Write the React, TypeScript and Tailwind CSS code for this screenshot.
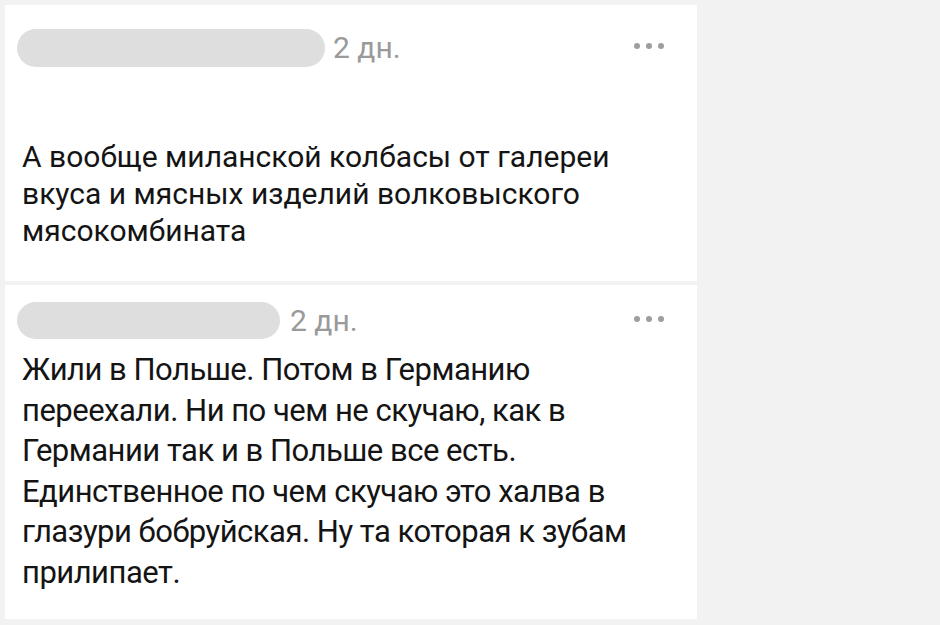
import React from "react";

function Dots() {
  return (
    <div className="flex gap-[6px] items-center">
      <span className="w-[6px] h-[6px] rounded-full bg-[#9e9e9e]" />
      <span className="w-[6px] h-[6px] rounded-full bg-[#9e9e9e]" />
      <span className="w-[6px] h-[6px] rounded-full bg-[#9e9e9e]" />
    </div>
  );
}

export default function App() {
  return (
    <div className="w-[940px] h-[625px] bg-[#f2f2f2] pt-[5px] pl-[5px] overflow-hidden" style={{ fontFamily: "Roboto, 'Noto Sans', sans-serif" }}>
      <div className="w-[692px] flex flex-col gap-[4px]">
        <div className="bg-white h-[276px] pl-[12px] pr-[33px] pt-[24px]">
          <div className="flex items-center">
            <div className="w-[308px] h-[38px] rounded-full bg-[#dedede]" />
            <span className="ml-[8px] text-[30px] leading-[38px] text-[#9a9a9a]">2 дн.</span>
            <div className="ml-auto mt-[-4px]"><Dots /></div>
          </div>
          <p className="mt-[71px] pl-[5px] text-[30px] leading-[37px] text-[#141414]">
            А вообще миланской колбасы от галереи<br />вкуса и мясных изделий волковыского<br />мясокомбината
          </p>
        </div>
        <div className="bg-white h-[334px] pl-[12px] pr-[33px] pt-[17px]">
          <div className="flex items-center">
            <div className="w-[263px] h-[37px] rounded-full bg-[#dedede]" />
            <span className="ml-[10px] text-[30px] leading-[37px] text-[#9a9a9a]">2 дн.</span>
            <div className="ml-auto mt-[-4px]"><Dots /></div>
          </div>
          <p className="mt-[11px] pl-[5px] text-[31px] leading-[40.5px] text-[#141414] tracking-[-0.5px]">
            Жили в Польше. Потом в Германию<br />переехали. Ни по чем не скучаю, как в<br />Германии так и в Польше все есть.<br />Единственное по чем скучаю это халва в<br />глазури бобруйская. Ну та которая к зубам<br />прилипает.
          </p>
        </div>
      </div>
    </div>
  );
}
